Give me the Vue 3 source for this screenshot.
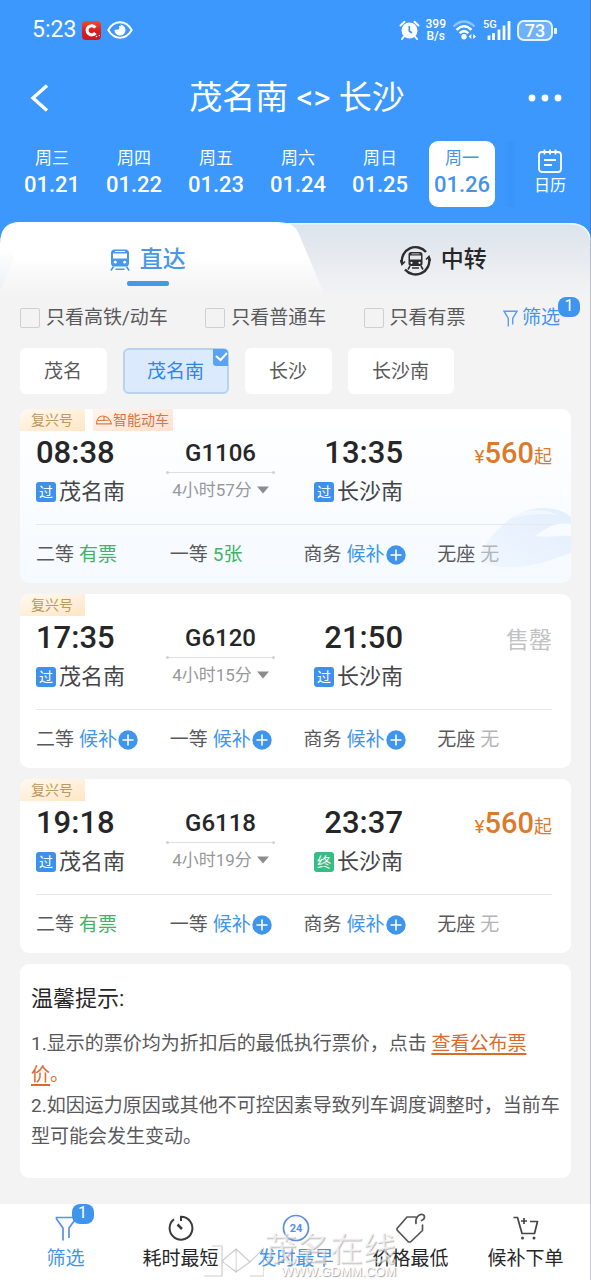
<script setup>
import { ref } from 'vue'

const dates = [
  { week: '周三', day: '01.21' },
  { week: '周四', day: '01.22' },
  { week: '周五', day: '01.23' },
  { week: '周六', day: '01.24' },
  { week: '周日', day: '01.25' },
  { week: '周一', day: '01.26' }
]
const activeDate = ref('01.26')

const filters = ref([
  { id: 'fast', label: '只看高铁/动车', on: false },
  { id: 'normal', label: '只看普通车', on: false },
  { id: 'avail', label: '只看有票', on: false }
])

const stations = ref([
  { name: '茂名', on: false },
  { name: '茂名南', on: true },
  { name: '长沙', on: false },
  { name: '长沙南', on: false }
])

const wait = { text: '候补', kind: 'wait' }
const none = { text: '无', kind: 'none' }
const trains = [
  {
    no: 'G1106', dep: '08:38', arr: '13:35', dur: '4小时57分', end: '过', price: '560', smart: true,
    seats: [
      { name: '二等', text: '有票', kind: 'have' },
      { name: '一等', text: '5张', kind: 'have' },
      { name: '商务', ...wait },
      { name: '无座', ...none }
    ]
  },
  {
    no: 'G6120', dep: '17:35', arr: '21:50', dur: '4小时15分', end: '过', price: '', smart: false,
    seats: [
      { name: '二等', ...wait },
      { name: '一等', ...wait },
      { name: '商务', ...wait },
      { name: '无座', ...none }
    ]
  },
  {
    no: 'G6118', dep: '19:18', arr: '23:37', dur: '4小时19分', end: '终', price: '560', smart: false,
    seats: [
      { name: '二等', text: '有票', kind: 'have' },
      { name: '一等', ...wait },
      { name: '商务', ...wait },
      { name: '无座', ...none }
    ]
  }
]
</script>

<template>
  <div class="page">
    <header class="header">
      <div class="status">
        <div class="status-side">
          <span class="clock">5:23</span>
          <svg class="app-badge" width="19" height="19" viewBox="0 0 19 19" aria-hidden="true">
            <defs>
              <linearGradient id="red" x1="0" y1="0" x2="0" y2="1">
                <stop offset="0" stop-color="#e8502f" />
                <stop offset="0.5" stop-color="#dc1f22" />
                <stop offset="1" stop-color="#d2141c" />
              </linearGradient>
            </defs>
            <rect width="19" height="19" rx="4" fill="url(#red)" />
            <path d="M13.4 6.6A4.6 4.6 0 1 0 13.4 12" fill="none" stroke="#fff" stroke-width="3" />
            <circle cx="14.5" cy="15.5" r="0.8" fill="#fff" />
            <circle cx="17.3" cy="14.6" r="0.7" fill="#fff" />
          </svg>
          <svg width="26" height="18" viewBox="0 0 26 18" aria-hidden="true">
            <path d="M1.3 9C4.2 4 8.3 1.3 13 1.3S21.8 4 24.7 9C21.8 14 17.7 16.7 13 16.7S4.2 14 1.3 9Z" fill="none" stroke="#fff" stroke-width="2" />
            <path d="M13 3.600A5.500 5.500 0 1 1 7.500 8.600A3.200 3.200 0 0 0 13 3.600Z" fill="#fff" />
            <circle cx="13" cy="9.500" r="4.600" fill="#fff" />
            <circle cx="10" cy="6.500" r="2.300" fill="#3c98fc" />
          </svg>
        </div>
        <div class="status-side right">
          <svg width="21" height="20" viewBox="0 0 21 20" aria-hidden="true">
            <circle cx="10.5" cy="10.5" r="8" fill="#fff" />
            <path d="M1.5 5.5L5.5 1.8M19.5 5.5L15.5 1.8" stroke="#fff" stroke-width="2" stroke-linecap="round" />
            <path d="M5 16.5L3 19M16 16.5L18 19" stroke="#fff" stroke-width="2" stroke-linecap="round" />
            <path d="M10.3 6V11L13 13" fill="none" stroke="#3c98fc" stroke-width="1.7" />
          </svg>
          <span class="speed"><span>399</span><span>B/s</span></span>
          <svg width="25" height="20" viewBox="0 0 25 20" aria-hidden="true">
            <path d="M1.5 6.5Q12 -3.5 22.5 6.5" fill="none" stroke="#8cc4ff" stroke-width="2.4" />
            <path d="M4.5 9.8Q12 2.8 19.5 9.8" fill="none" stroke="#fff" stroke-width="2.5" />
            <path d="M7.7 13.2Q12 9 16.3 13.2" fill="none" stroke="#fff" stroke-width="2.5" />
            <circle cx="12" cy="16.7" r="2.7" fill="#fff" />
            <path d="M16.500 16.500L19.300 14V19ZM24 16.500L21.200 14V19Z" fill="#fff" />
          </svg>
          <span class="signal">
            <svg width="28" height="20" viewBox="0 0 28 20" aria-hidden="true">
              <path d="M6 20V15.500M10.500 20V13M16 20V9.500M21 20V5.500M26 20V1" stroke="#fff" stroke-width="2.800" />
            </svg>
            <span class="net">5G</span>
          </span>
          <span class="battery">73</span>
        </div>
      </div>

      <div class="title-row">
        <button class="icon-btn" type="button" aria-label="返回">
          <svg width="20" height="28" viewBox="0 0 20 28" aria-hidden="true">
            <path d="M17 1.500L3 14L17 26.500" fill="none" stroke="#fff" stroke-width="3.400" />
          </svg>
        </button>
        <h1>茂名南 &lt;&gt; 长沙</h1>
        <button class="icon-btn" type="button" aria-label="更多">
          <svg width="34" height="8" viewBox="0 0 34 8" aria-hidden="true">
            <circle cx="4" cy="4" r="3.400" fill="#fff" />
            <circle cx="17" cy="4" r="3.400" fill="#fff" />
            <circle cx="30" cy="4" r="3.400" fill="#fff" />
          </svg>
        </button>
      </div>

      <nav class="dates">
        <div v-for="d in dates" :key="d.day" class="date-cell">
          <button type="button" class="date" :class="{ active: d.day === activeDate }" @click="activeDate = d.day">
            <span class="week">{{ d.week }}</span>
            <span class="day">{{ d.day }}</span>
          </button>
        </div>
        <button type="button" class="calendar">
          <svg width="24" height="24" viewBox="0 0 24 24" fill="none" stroke="#fff" stroke-width="1.800" aria-hidden="true">
            <rect x="1" y="3" width="22" height="20" rx="3" />
            <path d="M6.500 0.500V5.500M12 0.500V5.500M17.500 0.500V5.500M6 11H18M6 16H14" />
          </svg>
          <span>日历</span>
        </button>
      </nav>
    </header>

    <div class="tabs" role="tablist">
      <svg class="tabs-bg" viewBox="0 0 591 74" preserveAspectRatio="none" aria-hidden="true">
        <defs>
          <linearGradient id="gray" x1="0" y1="0" x2="0" y2="1">
            <stop offset="0" stop-color="#dce3ec" />
            <stop offset="1" stop-color="#f3f3f4" />
          </linearGradient>
          <linearGradient id="white" x1="0" y1="0" x2="0" y2="1">
            <stop offset="0.450" stop-color="#fff" />
            <stop offset="1" stop-color="#f3f3f4" />
          </linearGradient>
          <linearGradient id="corner" x1="0" y1="0" x2="0" y2="1">
            <stop offset="0" stop-color="#fff" />
            <stop offset="1" stop-color="#eff1f3" />
          </linearGradient>
        </defs>
        <path d="M260 1H570Q591 1 591 24V74H260Z" fill="url(#gray)" />
        <path d="M270 1.800H570Q590 1.800 591 22" fill="none" stroke="#e8f8ff" stroke-width="1.500" />
        <path d="M0 74V22Q0 0 20 0H278Q293 0 298 10L325 74Z" fill="url(#white)" />
        <path d="M0 24H18L2 66H0Z" fill="url(#corner)" />
      </svg>
      <button type="button" role="tab" class="tab active" aria-selected="true">
        <svg width="20" height="22" viewBox="0 0 20 22" aria-hidden="true">
          <rect x="1" y="0.500" width="18" height="17" rx="3.500" fill="#4798e6" />
          <rect x="3" y="4.500" width="14" height="5" fill="#fff" />
          <rect x="5" y="2" width="10" height="1" fill="#fff" />
          <circle cx="5.300" cy="13.200" r="1.400" fill="#fff" />
          <circle cx="14.700" cy="13.200" r="1.400" fill="#fff" />
          <path d="M3.500 17.500L1 21.500M16.500 17.500L19 21.500M5.500 20.300H14.500" stroke="#4798e6" stroke-width="1.600" />
        </svg>
        <span>直达</span>
      </button>
      <button type="button" role="tab" class="tab" aria-selected="false">
        <svg width="31" height="31" viewBox="0 0 31 31" aria-hidden="true">
          <path d="M2 18A13.700 13.700 0 0 1 26 7M29 13A13.700 13.700 0 0 1 5 24.500" fill="none" stroke="#2d2d30" stroke-width="2.400" />
          <path d="M0.500 15L2 19.500L5 16.500M30.500 16L29 11.500L26 14.500" fill="none" stroke="#2d2d30" stroke-width="1.600" />
          <rect x="8.500" y="7" width="14" height="14" rx="2.500" fill="#2d2d30" />
          <rect x="10" y="10.500" width="11" height="4" fill="#e5e9ee" />
          <rect x="11.500" y="8.500" width="8" height="0.800" fill="#e5e9ee" />
          <circle cx="11.500" cy="17.800" r="1.100" fill="#fff" />
          <circle cx="19.500" cy="17.800" r="1.100" fill="#fff" />
          <path d="M10 21L8 24.500M21 21L23 24.500M12 23H19" stroke="#2d2d30" stroke-width="1.600" />
        </svg>
        <span>中转</span>
      </button>
    </div>

    <main class="content">
      <div class="checks">
        <label v-for="f in filters" :key="f.id" class="check" :for="f.id">
          <input :id="f.id" v-model="f.on" type="checkbox" />
          <span>{{ f.label }}</span>
        </label>
        <button type="button" class="filter">
          <svg width="15" height="17" viewBox="0 0 15 17" fill="none" stroke="#5a9cf0" stroke-width="1.400" aria-hidden="true">
            <path d="M5.300 16.500V8.500L1 1.200H14L9.700 8.500V14.500" />
          </svg>
          <span>筛选</span>
          <span class="badge">1</span>
        </button>
      </div>

      <div class="chips">
        <button v-for="s in stations" :key="s.name" type="button" class="chip" :class="{ on: s.on }" :aria-pressed="s.on" @click="s.on = !s.on">
          {{ s.name }}
          <svg v-if="s.on" class="tick" width="15" height="17" viewBox="0 0 15 17" aria-hidden="true">
            <path d="M0 0H11Q15 0 15 4V17H3Q0 17 0 14Z" fill="#5aa2f4" />
            <path d="M3 7L7.500 11L14 4" fill="none" stroke="#fff" stroke-width="2" />
          </svg>
        </button>
      </div>

      <article v-for="t in trains" :key="t.no" class="card" :class="{ smart: t.smart }">
        <svg v-if="t.smart" class="wave" width="92" height="64" viewBox="0 0 92 64" aria-hidden="true">
          <defs>
            <linearGradient id="wing" x1="1" y1="0" x2="0" y2="1">
              <stop offset="0" stop-color="#e3effd" />
              <stop offset="1" stop-color="#f0f6fe" />
            </linearGradient>
          </defs>
          <path d="M0 50C12 24 34 4 60 1C76 0 88 6 92 10V46C74 52 52 62 24 60C12 59 2 56 0 50Z" fill="url(#wing)" />
          <path d="M92 17C78 15 68 20 56 29C68 31 80 28 92 29Z" fill="#f8fbff" />
          <path d="M30 12C44 3 62 0 78 8C62 6 46 7 30 12Z" fill="#f1f7ff" />
        </svg>
        <div class="tags">
          <span class="tag gold">复兴号</span>
          <span v-if="t.smart" class="tag orange">
            <svg width="16" height="10" viewBox="0 0 16 10" fill="none" stroke="#e07a3e" stroke-width="1.200" aria-hidden="true">
              <path d="M0.500 8.800C1 4 3 1 6.500 1C10.500 1 14 4.500 15.500 8.800ZM2 5.500H8V1.500M8 5.500L13 5" />
            </svg>
            智能动车
          </span>
        </div>
        <div class="trip">
          <div class="place">
            <strong class="time">{{ t.dep }}</strong>
            <span class="station"><i class="mark">过</i>茂名南</span>
          </div>
          <div class="middle">
            <span class="number">{{ t.no }}</span>
            <span class="line"></span>
            <button type="button" class="duration">
              {{ t.dur }}
              <svg width="12" height="8" viewBox="0 0 12 8" aria-hidden="true"><path d="M0 0.500H12L6 7.500Z" fill="#8d8d90" /></svg>
            </button>
          </div>
          <div class="place arrive">
            <strong class="time">{{ t.arr }}</strong>
            <span class="station"><i class="mark" :class="{ end: t.end === '终' }">{{ t.end }}</i>长沙南</span>
          </div>
          <div v-if="t.price" class="price"><small>¥</small><b>{{ t.price }}</b><span>起</span></div>
          <div v-else class="sold">售罄</div>
        </div>
        <div class="seats">
          <div v-for="s in t.seats" :key="s.name" class="seat">
            <span>{{ s.name }}</span>
            <span :class="s.kind">{{ s.text }}</span>
            <svg v-if="s.kind === 'wait'" width="20" height="20" viewBox="0 0 20 20" aria-hidden="true">
              <circle cx="10" cy="10" r="9.700" fill="#3f95ee" />
              <path d="M10 4.500V15.500M4.500 10H15.500" stroke="#fff" stroke-width="1.600" />
            </svg>
          </div>
        </div>
      </article>

      <section class="tips">
        <h2>温馨提示:</h2>
        <p>1.显示的票价均为折扣后的最低执行票价，点击 <a href="#">查看公布票价</a><em>。</em></p>
        <p>2.如因运力原因或其他不可控因素导致列车调度调整时，当前车型可能会发生变动。</p>
      </section>
    </main>

    <nav class="bottom">
      <button type="button" class="nav on">
        <span class="nav-icon">
          <svg width="22" height="26" viewBox="0 0 22 26" fill="none" stroke="#5a90e4" stroke-width="1.700" aria-hidden="true">
            <path d="M8 25.500V13L1.500 4V2.500H20.500V4L14 13V23" />
          </svg>
          <span class="badge">1</span>
        </span>
        <span>筛选</span>
      </button>
      <button type="button" class="nav">
        <span class="nav-icon">
          <svg width="26" height="26" viewBox="0 0 26 26" fill="none" stroke="#3b3b3d" stroke-width="2" aria-hidden="true">
            <path d="M13 6V1.800A11.400 11.400 0 1 1 6 4.200" />
            <path d="M9.500 9.500L14 14" stroke-width="2.500" />
          </svg>
        </span>
        <span>耗时最短</span>
      </button>
      <button type="button" class="nav on">
        <span class="nav-icon">
          <svg width="28" height="28" viewBox="0 0 28 28" aria-hidden="true">
            <circle cx="14" cy="14" r="12.500" fill="none" stroke="#5a90e4" stroke-width="1.700" />
            <text x="14" y="18" text-anchor="middle" class="hours">24</text>
          </svg>
        </span>
        <span>发时最早</span>
      </button>
      <button type="button" class="nav">
        <span class="nav-icon">
          <svg width="30" height="30" viewBox="0 0 30 30" fill="none" stroke="#555558" stroke-width="1.700" stroke-linejoin="round" stroke-linecap="round" aria-hidden="true">
            <path d="M20 4H11L1 15.500V17L12.500 29H14.500L26.500 17.500V12" />
            <path d="M20 10.500C19 5 22.500 0.800 26.500 1.500C29.500 2.500 29 6.500 25.500 7.500" />
          </svg>
        </span>
        <span>价格最低</span>
      </button>
      <button type="button" class="nav">
        <span class="nav-icon">
          <svg width="26" height="24" viewBox="0 0 26 24" fill="none" stroke="#454548" stroke-width="1.700" stroke-linejoin="round" aria-hidden="true">
            <path d="M0.500 1.500H4.500L9 17.500H21.500L24.500 5.500H17M11 2V8M8 5H14" />
            <circle cx="9.500" cy="22" r="1.500" fill="#454548" stroke="none" />
            <circle cx="21" cy="22" r="1.500" fill="#454548" stroke="none" />
          </svg>
        </span>
        <span>候补下单</span>
      </button>
    </nav>

    <div class="watermark" aria-hidden="true">
      <svg width="66" height="42" viewBox="0 0 66 42" fill="none">
        <g stroke="#b9b9bb" stroke-width="1.200">
          <path d="M14 8H24V38H6M24 23L38 11V34L24 23M38 11L52 24L66 10V38H52M38 34L52 24" />
        </g>
        <path d="M12 10H22V36M26 24L37 15V31Z" stroke="#fff" stroke-width="1" />
      </svg>
      <div class="wm-text">
        <span class="wm-name">茂名在线</span>
        <span class="wm-url">WWW.GDMM.COM</span>
      </div>
    </div>
  </div>
</template>

<style>
body {
  background: #f3f3f4;
}
</style>

<style scoped>
* {
  box-sizing: border-box;
}
.page {
  position: relative;
  min-height: 100vh;
  display: flex;
  flex-direction: column;
  background: #f3f3f4;
  font-family: Roboto, "Noto Sans CJK SC", sans-serif;
  font-size: 19px;
  line-height: 24px;
  color: #59595b;
  overflow: hidden;
}
.page::after {
  content: "";
  position: absolute;
  top: 0;
  right: 0;
  bottom: 0;
  width: 1px;
  background: rgba(60, 70, 90, 0.3);
}
button {
  border: 0;
  padding: 0;
  background: none;
  font: inherit;
  color: inherit;
}
svg {
  flex: none;
  display: block;
}
.header {
  background: #3c98fc;
  color: #fff;
  padding-bottom: 15px;
}
.status {
  height: 60px;
  padding: 0 38px 0 32px;
  display: flex;
  align-items: center;
  justify-content: space-between;
}
.status-side {
  display: flex;
  align-items: center;
  gap: 6px;
}
.clock {
  font-size: 23px;
}
.speed {
  display: flex;
  flex-direction: column;
  align-items: center;
  font-size: 12px;
  line-height: 12px;
  font-weight: 500;
}
.signal {
  position: relative;
}
.net {
  position: absolute;
  left: 0;
  top: 0;
  font-size: 11px;
  line-height: 10px;
  font-weight: 500;
}
.battery {
  position: relative;
  width: 36px;
  height: 21px;
  border: 2px solid #e4f4ff;
  border-radius: 7px;
  background: #6fb2fb;
  font-size: 18px;
  line-height: 18px;
  font-weight: 500;
  text-align: center;
}
.battery::after {
  content: "";
  position: absolute;
  right: -6px;
  top: 6px;
  width: 3px;
  height: 6px;
  border-radius: 1px;
  background: #e4f4ff;
}
.title-row {
  height: 76px;
  padding: 0 27px 0 30px;
  display: grid;
  grid-template-columns: 36px 1fr 36px;
  align-items: center;
}
.icon-btn {
  display: flex;
}
h1 {
  margin: 0;
  font-size: 33px;
  line-height: 40px;
  font-weight: 400;
  text-align: center;
}
.dates {
  margin-top: 5px;
  padding-left: 11px;
  display: grid;
  grid-template-columns: repeat(6, 1fr) 88px;
}
.date-cell {
  display: flex;
  justify-content: center;
}
.date {
  width: 66px;
  height: 66px;
  border-radius: 9px;
  display: flex;
  flex-direction: column;
  align-items: center;
  padding-top: 5px;
}
.date.active {
  background: #fff;
  color: #4594ea;
}
.week {
  font-size: 17px;
}
.day {
  font-size: 22px;
  line-height: 29px;
  font-weight: 500;
}
.calendar {
  display: flex;
  flex-direction: column;
  align-items: center;
  gap: 1px;
  padding: 8px 0 0 6px;
  font-size: 16px;
  background: linear-gradient(90deg, #3c98fc, #3993f8 9%, #3c98fc 16%);
}
.tabs {
  position: relative;
  display: grid;
  grid-template-columns: 1fr 1fr;
  height: 74px;
  background: #3c98fc;
}
.tabs-bg {
  position: absolute;
  inset: 0;
  width: 100%;
  height: 100%;
}
.tab {
  position: relative;
  display: flex;
  align-items: center;
  justify-content: center;
  gap: 10px;
  padding-top: 2px;
  font-size: 23px;
  font-weight: 500;
  color: #262628;
}
.tab.active {
  color: #4798e6;
}
.tab.active::after {
  content: "";
  position: absolute;
  bottom: 10px;
  width: 42px;
  height: 5px;
  border-radius: 2px;
  background: #4798e6;
}
.content {
  padding: 0 20px 26px;
}
.checks {
  height: 42px;
  padding: 2px 11px 0 0;
  display: flex;
  align-items: center;
  justify-content: space-between;
}
.check {
  display: flex;
  align-items: center;
  gap: 6px;
}
.check input {
  appearance: none;
  margin: 0;
  width: 20px;
  height: 20px;
  border: 1px solid #cfcfd1;
  border-radius: 2px;
}
.check input:checked {
  background: #3f95ee;
}
.filter {
  position: relative;
  display: flex;
  align-items: center;
  gap: 4px;
  color: #4594ea;
}
.badge {
  position: absolute;
  width: 22px;
  height: 20px;
  border-radius: 8px;
  background: #3f95ee;
  color: #fff;
  font-size: 16px;
  line-height: 18px;
  text-align: center;
}
.filter .badge {
  left: 55px;
  top: -9px;
}
.chips {
  display: flex;
  gap: 16px;
  margin: 10px 0 15px;
}
.chip {
  position: relative;
  height: 46px;
  padding: 2px 25px 0 24px;
  border-radius: 6px;
  background: #fff;
}
.chip.on {
  background: #dbebfd;
  box-shadow: inset 0 0 0 2px #b9d3ef;
  color: #2f86ea;
}
.tick {
  position: absolute;
  right: 1px;
  top: 1px;
}
.card {
  position: relative;
  height: 174px;
  margin-bottom: 11px;
  border-radius: 9px;
  background: #fff;
  overflow: hidden;
}
.card.smart {
  background: linear-gradient(#fff, #f5faff);
}
.wave {
  position: absolute;
  right: 0;
  bottom: 12px;
}
.tags {
  display: flex;
  gap: 8px;
  height: 22px;
}
.tag {
  display: flex;
  align-items: center;
  font-size: 14px;
  line-height: 22px;
}
.gold {
  padding: 0 12px 0 11px;
  background: linear-gradient(165deg, #fff9f0, #ffe6c4);
  color: #b99a63;
}
.orange {
  padding: 0 4px 0 3px;
  gap: 1px;
  background: linear-gradient(165deg, #fff5ef, #ffe0d0);
  color: #d9763f;
}
.trip {
  position: relative;
  height: 94px;
  margin: 0 19px 0 16px;
  display: grid;
  grid-template-columns: 130fr 109fr 128fr 149fr;
  border-bottom: 1px solid #e6e9ec;
}
.place {
  display: flex;
  flex-direction: column;
  padding-top: 4px;
}
.arrive {
  align-items: flex-end;
}
.time {
  font-size: 31px;
  line-height: 36px;
  font-weight: 500;
  color: #262628;
}
.station {
  margin-top: 6px;
  display: flex;
  align-items: center;
  gap: 3px;
  font-size: 22px;
  line-height: 29px;
  color: #454548;
}
.mark {
  width: 20px;
  height: 20px;
  border-radius: 3px;
  background: #3f90ea;
  color: #fff;
  font-size: 14px;
  line-height: 20px;
  font-style: normal;
  text-align: center;
}
.mark.end {
  background: #35bd83;
}
.middle {
  display: flex;
  flex-direction: column;
  align-items: center;
  padding-top: 8px;
}
.number {
  font-size: 24px;
  line-height: 28px;
  font-weight: 500;
  color: #262628;
}
.line {
  position: relative;
  width: 100%;
  height: 1px;
  margin-top: 5px;
  background: #dedfe1;
}
.line::before,
.line::after {
  content: "";
  position: absolute;
  top: -1px;
  width: 3px;
  height: 3px;
  border-radius: 2px;
  background: #d2d3d6;
}
.line::before {
  left: 0;
}
.line::after {
  right: 0;
}
.duration {
  display: flex;
  align-items: center;
  gap: 5px;
  margin-top: 5px;
  font-size: 17px;
  color: #98989b;
}
.price {
  display: flex;
  justify-content: flex-end;
  align-items: baseline;
  height: 36px;
  margin-top: 4px;
  line-height: 36px;
  color: #dd7a2a;
}
.price small {
  font-size: 19px;
}
.price b {
  font-size: 29px;
  font-weight: 500;
}
.price span {
  font-size: 18px;
}
.sold {
  padding-top: 11px;
  text-align: right;
  font-size: 23px;
  line-height: 28px;
  color: #c2c2c4;
}
.seats {
  position: relative;
  margin-left: 16px;
  padding-top: 18px;
  display: grid;
  grid-template-columns: repeat(4, 1fr);
}
.seat {
  display: flex;
  align-items: center;
  gap: 5px;
}
.seat svg {
  margin-left: -4px;
}
.have {
  color: #41b266;
}
.wait {
  color: #3f95ee;
}
.none {
  color: #b4b4b7;
}
.tips {
  padding: 20px 11px 26px;
  border-radius: 9px;
  background: #fff;
}
.tips h2 {
  margin: 0 0 14px;
  font-size: 22px;
  line-height: 30px;
  font-weight: 400;
  color: #262628;
}
.tips p {
  margin: 0;
  line-height: 31px;
}
.tips a,
.tips em {
  color: #db6a2c;
  font-style: normal;
}
.tips a {
  text-decoration-thickness: 2px;
  text-underline-offset: 3px;
}
.bottom {
  margin-top: auto;
  height: 76px;
  padding: 8px 8px 0;
  display: grid;
  grid-template-columns: repeat(5, 1fr);
  background: #fff;
}
.nav {
  display: flex;
  flex-direction: column;
  align-items: center;
  justify-content: flex-start;
  gap: 3px;
  color: #262628;
}
.nav.on {
  color: #3f95ee;
}
.nav-icon {
  position: relative;
  height: 32px;
  display: flex;
  align-items: center;
}
.nav .badge {
  left: 17px;
  top: -8px;
}
.hours {
  font-size: 11px;
  font-weight: 700;
  fill: #5a90e4;
}
.watermark {
  position: absolute;
  left: 198px;
  bottom: 0;
  display: flex;
  align-items: flex-end;
  pointer-events: none;
  opacity: 0.7;
}
.wm-text {
  display: flex;
  flex-direction: column;
  align-items: flex-end;
  color: rgba(255, 255, 255, 0.7);
  text-shadow: 1px 1px 1px #a0a0a4;
}
.wm-name {
  font-size: 33px;
  line-height: 28px;
}
.wm-url {
  font-family: "Liberation Sans", sans-serif;
  font-size: 13px;
  line-height: 16px;
  color: #fff;
  text-shadow: 1px 1px 1px #77777b;
}
</style>
